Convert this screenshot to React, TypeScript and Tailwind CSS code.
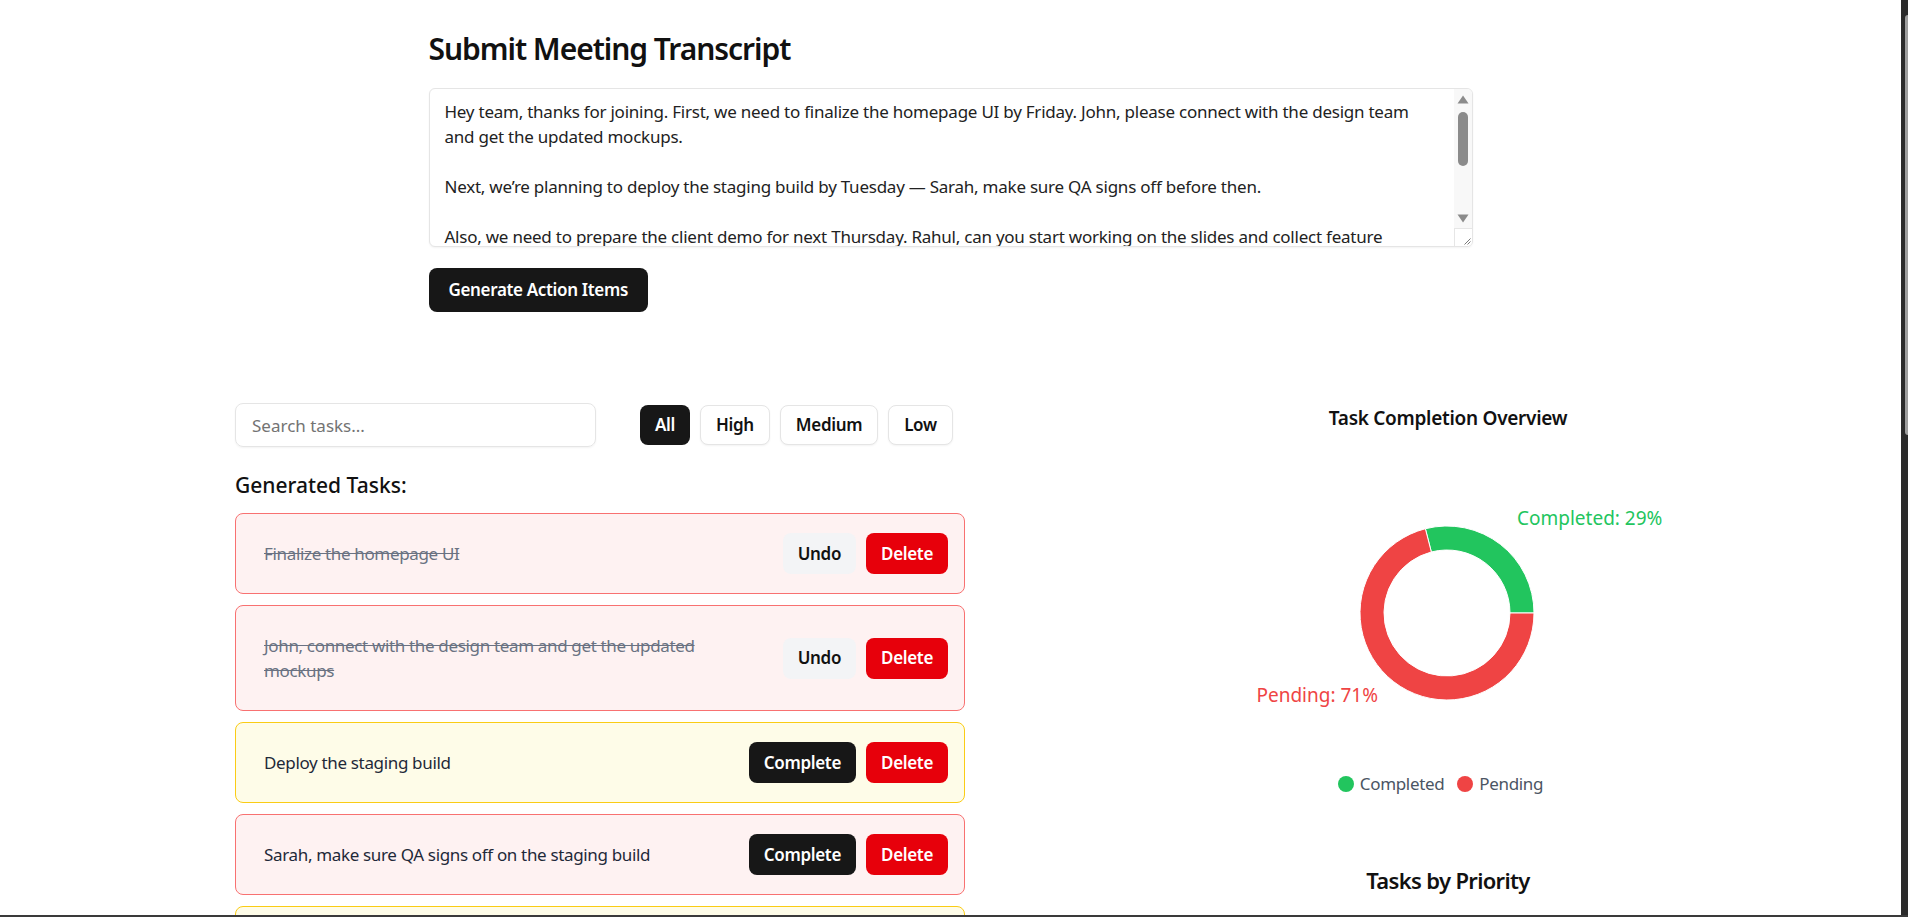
import React from "react";

type Task = { text: string; done: boolean; pr: "high" | "medium" | "low" };

const tasks: Task[] = [
  { text: "Finalize the homepage UI", done: true, pr: "high" },
  { text: "John, connect with the design team and get the updated mockups", done: true, pr: "high" },
  { text: "Deploy the staging build", done: false, pr: "medium" },
  { text: "Sarah, make sure QA signs off on the staging build", done: false, pr: "high" },
  { text: "Prepare the client demo for next Thursday", done: false, pr: "medium" },
];

const transcript =
  "Hey team, thanks for joining. First, we need to finalize the homepage UI by Friday. John, please connect with the design team and get the updated mockups.\n\nNext, we\u2019re planning to deploy the staging build by Tuesday \u2014 Sarah, make sure QA signs off before then.\n\nAlso, we need to prepare the client demo for next Thursday. Rahul, can you start working on the slides and collect feature updates from everyone?\n\nLastly, let\u2019s schedule a quick retro for next Monday to review the sprint. Priya, could you send out the calendar invite?\n\nThanks everyone!";

function TaskCard({ t }: { t: Task }) {
  const cardColor =
    t.pr === "high"
      ? "bg-[#fef2f2] border-[#f87171]"
      : t.pr === "medium"
      ? "bg-[#fefce8] border-[#facc15]"
      : "bg-[#f0fdf4] border-[#4ade80]";
  return (
    <div className={`flex items-center justify-between rounded-lg border px-4 py-[19px] ${cardColor}`}>
      <p
        className={`max-w-[470px] px-3 py-2 text-[17px] leading-[25px] tracking-[-0.02em] ${
          t.done ? "text-[#6a7282] line-through" : "text-[#1e2939]"
        }`}
      >
        {t.text}
      </p>
      <div className="flex items-center gap-2.5">
        {t.done ? (
          <button className="h-[41px] rounded-lg bg-[#f3f4f6] px-[15px] text-[17px] font-semibold tracking-[-0.02em] text-[#111]">
            Undo
          </button>
        ) : (
          <button className="h-[41px] rounded-lg bg-[#171717] px-[15px] text-[17px] font-semibold tracking-[-0.02em] text-white">
            Complete
          </button>
        )}
        <button className="h-[41px] rounded-lg bg-[#e7000b] px-[15px] text-[17px] font-semibold tracking-[-0.02em] text-white">
          Delete
        </button>
      </div>
    </div>
  );
}

function Donut() {
  // center (249,181), outer 87, inner 63
  return (
    <svg width="500" height="330" viewBox="0 0 500 330" className="block overflow-visible">
      <path
        d="M336 181 A87 87 0 0 0 227.36 96.73 L233.33 119.98 A63 63 0 0 1 312 181 Z"
        fill="#22c55e"
        stroke="#fff"
        strokeWidth="1"
      />
      <path
        d="M227.36 96.73 A87 87 0 1 0 336 181 L312 181 A63 63 0 1 1 233.33 119.98 Z"
        fill="#ef4444"
        stroke="#fff"
        strokeWidth="1"
      />
      <text x="319" y="93" fill="#22c55e" fontSize="19" fontFamily="'Noto Sans', sans-serif">
        Completed: 29%
      </text>
      <text x="180" y="270" textAnchor="end" fill="#ef4444" fontSize="19" fontFamily="'Noto Sans', sans-serif">
        Pending: 71%
      </text>
    </svg>
  );
}

function FakeScrollbar() {
  return (
    <div className="flex w-[18px] shrink-0 flex-col bg-[#f8f8f8]">
      <div className="flex h-5 items-center justify-center">
        <svg width="12" height="9" viewBox="0 0 12 9">
          <path d="M6 0.5 L11.5 8.5 L0.5 8.5 Z" fill="#8b8b8b" />
        </svg>
      </div>
      <div className="flex-1 px-1 pt-[3px]">
        <div className="h-[54px] rounded-full bg-[#8b8b8b]" />
      </div>
      <div className="flex h-5 items-center justify-center">
        <svg width="12" height="9" viewBox="0 0 12 9">
          <path d="M0.5 0.5 L11.5 0.5 L6 8.5 Z" fill="#8b8b8b" />
        </svg>
      </div>
      <div className="h-[18px] border-l border-t border-[#e6e6e6] bg-white">
        <svg width="17" height="17" viewBox="0 0 17 17" className="block">
          <path d="M15.5 9.5 L9.5 15.5 M15.5 12.5 L12.5 15.5" stroke="#7a7a7a" strokeWidth="1" />
        </svg>
      </div>
    </div>
  );
}

const filterBase = "h-10 rounded-lg px-[15px] text-[17px] font-semibold tracking-[-0.02em]";

export default function App() {
  return (
    <div className="flex h-[917px] w-[1908px] flex-col overflow-hidden bg-white font-['Noto_Sans',sans-serif] text-[#111]">
      <div className="flex h-[915px]">
        <main className="h-full w-[1901px] overflow-hidden">
          <section className="mx-auto w-[1044px] pt-[31px]">
            <h1 className="text-[30px] font-semibold leading-9 tracking-[-0.035em] text-[#111]">Submit Meeting Transcript</h1>
            <div className="mt-[21px] flex h-[159px] overflow-hidden rounded-md border border-[#e5e5e5] bg-white shadow-xs">
              <textarea
                className="h-full min-w-0 flex-1 resize-none overflow-hidden py-2.5 pl-[15px] pr-[15px] text-[17px] leading-[25px] tracking-[-0.014em] text-[#222] outline-none"
                defaultValue={transcript}
              />
              <FakeScrollbar />
            </div>
            <button className="mt-[21px] block h-[44px] rounded-lg bg-[#171717] px-5 text-[17px] font-semibold tracking-[-0.02em] text-white">
              Generate Action Items
            </button>
          </section>

          <section className="mt-[91px] flex items-start pl-[235px]">
            <div className="w-[730px]">
              <div className="flex h-[44px] items-center gap-[44px]">
                <input
                  placeholder="Search tasks..."
                  className="h-[44px] w-[361px] shrink-0 rounded-lg border border-[#e5e5e5] px-4 text-[17px] text-[#111] shadow-xs outline-none placeholder:text-[#737373]"
                />
                <div className="flex items-center gap-[10px]">
                  <button className={`${filterBase} bg-[#171717] text-white`}>All</button>
                  <button className={`${filterBase} border border-[#e5e5e5] bg-white text-[#111] shadow-xs`}>High</button>
                  <button className={`${filterBase} border border-[#e5e5e5] bg-white text-[#111] shadow-xs`}>Medium</button>
                  <button className={`${filterBase} border border-[#e5e5e5] bg-white text-[#111] shadow-xs`}>Low</button>
                </div>
              </div>
              <h2 className="mt-6 text-[21px] font-medium leading-7 text-[#111]">Generated Tasks:</h2>
              <div className="mt-3.5 flex flex-col gap-[11px]">
                {tasks.map((t, i) => (
                  <TaskCard key={i} t={t} />
                ))}
              </div>
            </div>

            <div className="ml-[233px] w-[500px] pt-px">
              <h3 className="text-center text-[19px] font-semibold leading-7 tracking-[-0.015em] text-[#111]">
                Task Completion Overview
              </h3>
              <Donut />
              <div className="mt-[10px] flex h-6 items-center justify-center gap-[13px] pr-[15px] text-[17px] tracking-[-0.02em] text-[#4b5563]">
                <div className="flex items-center gap-[6px]">
                  <span className="h-4 w-4 rounded-full bg-[#22c55e]" />
                  <span>Completed</span>
                </div>
                <div className="flex items-center gap-[6px]">
                  <span className="h-4 w-4 rounded-full bg-[#ef4444]" />
                  <span>Pending</span>
                </div>
              </div>
              <h3 className="mt-[68px] text-center text-[22px] font-semibold leading-8 tracking-[-0.03em] text-[#111]">
                Tasks by Priority
              </h3>
            </div>
          </section>
        </main>
        <div className="relative w-[7px] bg-[#2b2b2b]">
          <div className="absolute left-[4px] top-[15px] h-[420px] w-[3px] rounded-l-sm bg-[#9e9e9e]" />
        </div>
      </div>
      <div className="h-[2px] bg-[#3a3a3a]" />
    </div>
  );
}
